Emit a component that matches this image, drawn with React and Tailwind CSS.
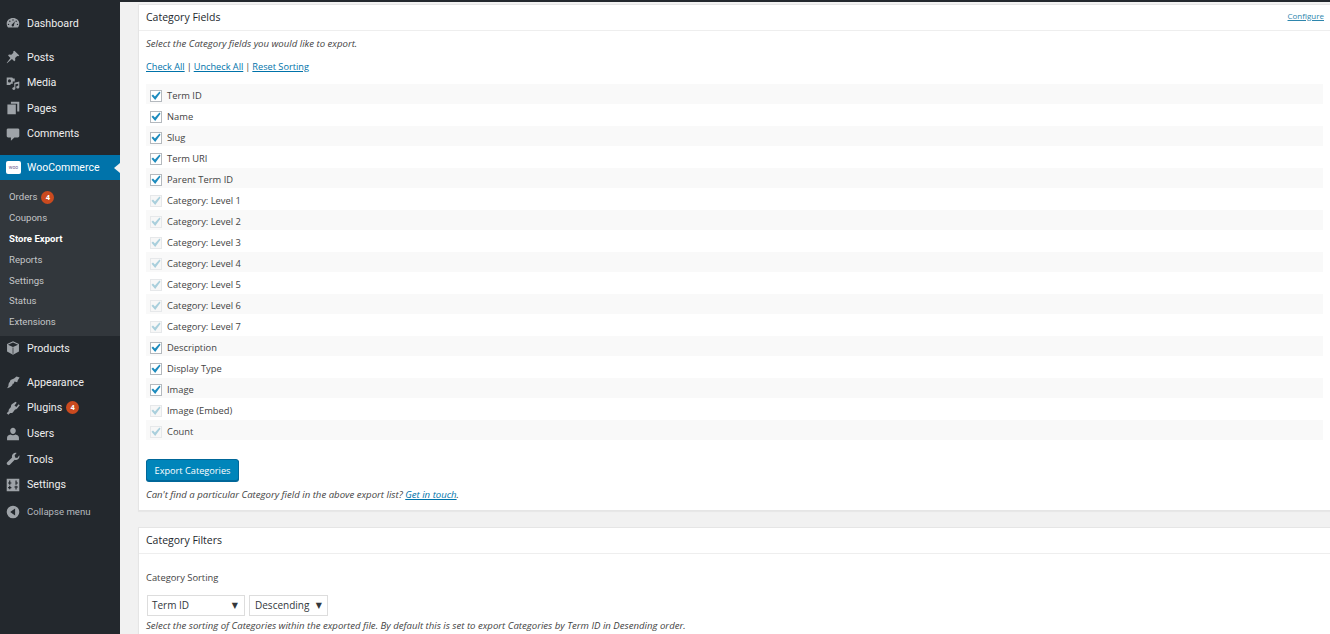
import React from 'react';

const iconClass = 'w-[14px] h-[14px] fill-[#9ea3a8] shrink-0';

const icons = {
  dashboard: <path d="M3 16.5C1.7 15 1 13 1 11 1 6.4 5 3 10 3s9 3.4 9 8c0 2-.7 4-2 5.5H3zM10 4.8a1 1 0 100 2 1 1 0 000-2zM5.5 6.6a1 1 0 100 2 1 1 0 000-2zm9 0a1 1 0 100 2 1 1 0 000-2zM3.6 11a1 1 0 100 2 1 1 0 000-2zm12.8 0a1 1 0 100 2 1 1 0 000-2zM12.8 7.4l-3.6 4.2a1.7 1.7 0 102.2 1.4l1.4-5.6z" fillRule="evenodd" />,
  posts: <path d="M12 1l7 7-1.6 1-1.4-.6-3 3 .3 3.4-1.5 1.2-3.3-3.3L1.5 19 1 18.500l5.300-7.200L3 8l1.200-1.500 3.400.3 3-3-.6-1.400z" />,
  media: <path d="M1 2h8l1 1.500h2.500V8H9.600v3.400c-.3-.1-.7-.2-1-.2-1.200 0-2.200.7-2.600 1.800H1V2zm4 2.800a2.200 2.200 0 100 4.400 2.200 2.200 0 000-4.400zM19 8V16c0 1.200-1 2-2.200 2s-2.200-.8-2.200-2 1-2 2.200-2c.2 0 .4 0 .6.1v-3.200l-4 .9V18c0 1.200-1 2-2.200 2s-2.200-.8-2.200-2 1-2 2.200-2c.2 0 .4 0 .6.1V9.700z" fillRule="evenodd" />,
  pages: <path d="M7 1h12v14h-3V4H7V1zM2 5h12v14H2V5z" />,
  comments: <path d="M3 2h14c1.100 0 2 .9 2 2v9c0 1.100-.9 2-2 2h-5l-5 4.500V15H3c-1.100 0-2-.9-2-2V4c0-1.100.9-2 2-2z" />,
  products: <path d="M10 .5l8.500 3.800v10.800L10 19.500l-8.500-4.400V4.300L10 .5zM2.800 5.200L10 8.500l7.200-3.300L10 2.200 2.800 5.200zM9.500 9.400v8.800h1V9.400h-1z" fillRule="evenodd" />,
  appearance: <path d="M15 2l4.500 1.400-2.600 4-.9 3-3.800-1.200-1.100 3-.6.2-5-1.800-.1-.6 1.100-2.900L11.500 5 15 2zM4.400 10.400L9.700 12.300l-.8 2.200c-1.100 1.300-3.900 3.400-7.700 4.500 1.700-1.800 2.500-3.700 2.400-5.500l.8-3.100z" />,
  plugins: <path d="M13.600 1l1.700 1.400-3.200 3.900 2.700 2.200 3.200-3.900 1.700 1.400-3.400 4.300c-.9 1.100-2.100 1.800-3.400 1.900L10 15.900c-1 1.200-2.600 1.700-4 1.100L3.400 19.700 1 17.600l2.800-2.800c-.3-1.100 0-2.400.8-3.300l2.500-3c-.3-1 -.1-2.300.7-3.300l.5-.6z" />,
  users: <path d="M10 1c2.300 0 4 1.900 4 4.400S12.300 10 10 10 6 7.900 6 5.400 7.700 1 10 1zM1.500 15.500c0-2.800 2.300-4.500 4.800-4.900.9.700 2.300 1.100 3.700 1.100s2.800-.4 3.700-1.100c2.500.4 4.800 2.100 4.800 4.900V19h-17v-3.500z" />,
  tools: <path d="M19 4.500c.6 1.900 0 4-1.500 5.400-1.400 1.300-3.300 1.700-5 1.100l-7 7.300c-.9.900-2.300.9-3.200 0l-.6-.6c-.9-.9-.9-2.300 0-3.200l7-6.700c-.6-1.800-.1-3.700 1.200-5.100 1.400-1.400 3.400-1.900 5.300-1.300L12.400 4.700l.6 3.100 3.100.7L19 4.500z" />,
  settings: <path d="M1 1h18v18H1V1zm3.500 2.500v3H3V8h1.500v1.500h1.700V8h1.500V6.500H6.200v-3H4.500zm9 0v6h1.700V8h1.800V6.500h-1.800v-3h-1.700zm-9 7.500v2H3v1.500h1.500v1.500h1.700v-1.500h1.500V13H6.200v-2H4.500zm9 0v1h-1.500v1.500h1.500v3h1.700v-3h1.800V12h-1.800v-1h-1.700z" fillRule="evenodd" />,
  collapse: <path d="M10 1a9 9 0 110 18 9 9 0 010-18zm3 4L6 10l7 5V5z" fillRule="evenodd" />,
};

function MenuIcon({ name }) {
  return <svg viewBox="0 0 20 20" className={iconClass}>{icons[name]}</svg>;
}

function Badge({ count }) {
  return (
    <span className="ml-[4px] w-[13px] h-[13px] rounded-full bg-[#ca4a1f] text-white text-[7.500px] font-bold flex items-center justify-center">
      {count}
    </span>
  );
}

function MenuItem({ icon, label, badge, className = 'h-[25.6px]' }) {
  return (
    <div className={`flex items-center pl-[6px] text-[#eeeeee] text-[10.700px] ${className}`}>
      <MenuIcon name={icon} />
      <span className="ml-[7px] pt-[1px]">{label}</span>
      {badge && <Badge count={badge} />}
    </div>
  );
}

function SubItem({ label, badge, current }) {
  return (
    <div className={`flex items-center h-[20.8px] pl-[9px] text-[9.600px] ${current ? 'text-white font-bold' : 'text-[#c3c5c7]'}`}>
      <span>{label}</span>
      {badge && <Badge count={badge} />}
    </div>
  );
}

function Sidebar() {
  return (
    <aside className="w-[120px] shrink-0 bg-[#23282d] pt-[8.400px] font-['Roboto',sans-serif]">
      <MenuItem icon="dashboard" label="Dashboard" />
      <div className="h-[8.400px]" />
      <MenuItem icon="posts" label="Posts" />
      <MenuItem icon="media" label="Media" />
      <MenuItem icon="pages" label="Pages" />
      <MenuItem icon="comments" label="Comments" />
      <div className="h-[8px]" />
      <div className="relative flex items-center h-[25px] pl-[6px] bg-[#0073aa] text-white text-[10.500px]">
        <span className="w-[15px] h-[13px] rounded-[2px] bg-white text-[#6d5a8c] text-[5px] flex items-center justify-center">woo</span>
        <span className="ml-[6px] pt-[1px]">WooCommerce</span>
        <span className="absolute right-0 top-[8px] border-y-[5px] border-y-transparent border-r-[6px] border-r-[#f1f1f1]" />
      </div>
      <div className="bg-[#32373c] pt-[7.400px] h-[156px]">
        <SubItem label="Orders" badge="4" />
        <SubItem label="Coupons" />
        <SubItem label="Store Export" current />
        <SubItem label="Reports" />
        <SubItem label="Settings" />
        <SubItem label="Status" />
        <SubItem label="Extensions" />
      </div>
      <MenuItem icon="products" label="Products" className="h-[25px]" />
      <div className="h-[8.800px]" />
      <MenuItem icon="appearance" label="Appearance" />
      <MenuItem icon="plugins" label="Plugins" badge="4" />
      <MenuItem icon="users" label="Users" />
      <MenuItem icon="tools" label="Tools" />
      <MenuItem icon="settings" label="Settings" />
      <div className="flex items-center h-[28px] pl-[6px] text-[#b4b9be] text-[9.600px]">
        <MenuIcon name="collapse" />
        <span className="ml-[7px] pt-[1px]">Collapse menu</span>
      </div>
    </aside>
  );
}

const fields = [
  ['Term ID', true],
  ['Name', true],
  ['Slug', true],
  ['Term URI', true],
  ['Parent Term ID', true],
  ['Category: Level 1', false],
  ['Category: Level 2', false],
  ['Category: Level 3', false],
  ['Category: Level 4', false],
  ['Category: Level 5', false],
  ['Category: Level 6', false],
  ['Category: Level 7', false],
  ['Description', true],
  ['Display Type', true],
  ['Image', true],
  ['Image (Embed)', false],
  ['Count', false],
];

function FieldRow({ label, enabled, striped }) {
  return (
    <div className="h-[21px]">
      <div className={`flex items-center h-[20px] pl-[4px] ${striped ? 'bg-[#f9f9f9]' : ''}`}>
        <span className={`w-[12px] h-[12px] mt-[4px] border flex items-center justify-center ${enabled ? 'border-[#b4b9be] bg-white' : 'border-[#e6e8ea] bg-[#f7f7f7]'}`}>
          <svg viewBox="0 0 12 12" className={`w-[12px] h-[12px] shrink-0 ${enabled ? 'fill-[#1e8cbe]' : 'fill-[#a9cfdc]'}`}>
            <path d="M1.500 5.800l1.500-1.400 1.900 2L9.500 1.500l1 1.300L5.200 10z" />
          </svg>
        </span>
        <span className="ml-[5px] pt-[4px] text-[9.350px] text-[#444]">{label}</span>
      </div>
    </div>
  );
}

function Card({ title, right, children, className = '' }) {
  return (
    <section className={`bg-white border border-r-0 border-[#e5e5e5] shadow-[0_1px_1px_rgba(0,0,0,0.04)] ${className}`}>
      <div className="flex items-center justify-between h-[26px] pl-[7px] pr-[6px] border-b border-[#eeeeee]">
        <h2 className="text-[10.500px] text-[#23282d]">{title}</h2>
        {right}
      </div>
      {children}
    </section>
  );
}

function SortSelect({ value, width, padding }) {
  return (
    <div className={`flex items-center justify-between h-[21px] border border-[#dddddd] bg-white text-[10px] text-[#32373c] ${padding} ${width}`}>
      <span>{value}</span>
      <span className="text-[8px] font-['DejaVu_Sans',sans-serif]">▼</span>
    </div>
  );
}

export default function App() {
  return (
    <div className="flex flex-col w-[1330px] h-[634px] overflow-hidden bg-[#f1f1f1] font-['Open_Sans',sans-serif]">
      <div className="h-[2px] shrink-0 bg-[#23282d]" />
      <div className="flex flex-1 min-h-0">
        <Sidebar />
        <main className="flex-1 min-w-0 pl-[18px] pt-[2px]">
          <Card
            title="Category Fields"
            right={<a className="mb-[3px] text-[8px] text-[#2e86ad] underline">Configure</a>}
          >
            <div className="pl-[7px] pr-[7px] pt-[4px] pb-[6px]">
              <p className="h-[18px] flex items-center text-[9.600px] italic text-[#444]">Select the Category fields you would like to export.</p>
              <p className="mt-[5px] h-[18px] flex items-center text-[9.200px] text-[#444] gap-[2px]">
                <a className="text-[#0073aa] underline">Check All</a>|
                <a className="text-[#0073aa] underline">Uncheck All</a>|
                <a className="text-[#0073aa] underline">Reset Sorting</a>
              </p>
              <div className="mt-[8px]">
                {fields.map(([label, enabled], i) => (
                  <FieldRow key={label} label={label} enabled={enabled} striped={i % 2 === 0} />
                ))}
              </div>
              <button className="block mt-[18px] pt-[1px] w-[93px] h-[22px] rounded-[3px] bg-[#0085ba] border border-[#006799] shadow-[0_1px_0_#006799] text-white text-[9.200px]">
                Export Categories
              </button>
              <p className="mt-[5px] h-[18px] flex items-center text-[9.600px] italic text-[#444]">
                Can't find a particular Category field in the above export list?&nbsp;
                <a className="text-[#0073aa] underline">Get in touch</a>.
              </p>
            </div>
          </Card>
          <Card title="Category Filters" className="mt-[16px]">
            <div className="px-[7px] pb-[20px]">
              <p className="pt-[17px] text-[9.350px] text-[#444]">Category Sorting</p>
              <div className="mt-[10px] ml-[1px] flex gap-[4px]">
                <SortSelect value="Term ID" width="w-[98px]" padding="pl-[4px] pr-[6px]" />
                <SortSelect value="Descending" width="w-[79px]" padding="pl-[5px] pr-[5px]" />
              </div>
              <p className="mt-[3px] text-[9.600px] italic text-[#444]">
                Select the sorting of Categories within the exported file. By default this is set to export Categories by Term ID in Desending order.
              </p>
            </div>
          </Card>
        </main>
      </div>
    </div>
  );
}
